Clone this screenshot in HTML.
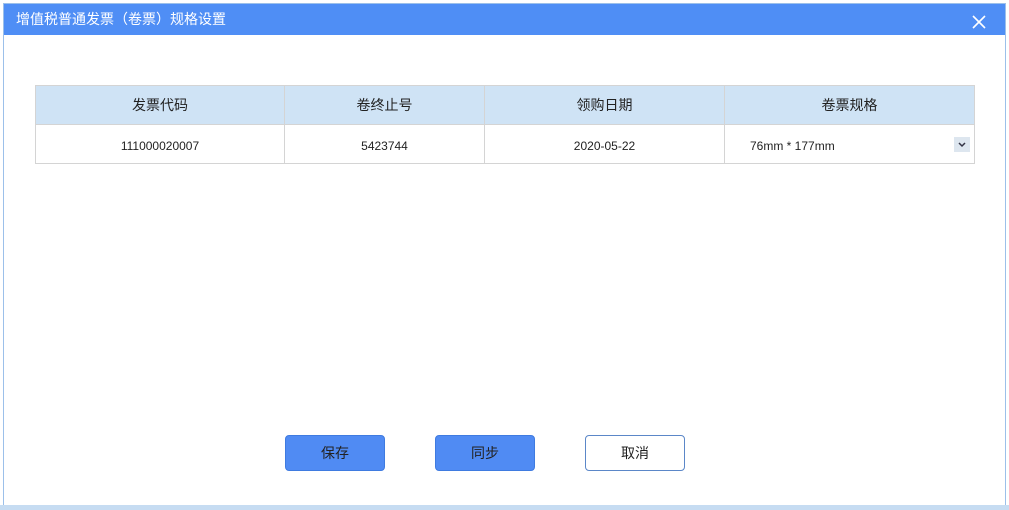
<!DOCTYPE html>
<html><head><meta charset="utf-8"><style>
body{margin:0;width:1009px;height:510px;background:#fff;position:relative;overflow:hidden;font-family:"Liberation Sans","Noto Sans CJK SC",sans-serif}
.win{position:absolute;left:3px;top:3px;width:1001px;height:501px;border:1px solid #9cc0ea;background:#fff}
.title{position:absolute;left:0;top:0;width:1001px;height:31px;background:#4f8ef5;color:#fff;font-size:14px;line-height:31px;padding-left:12px;box-sizing:border-box}
.x{position:absolute;right:18px;top:10px;width:16px;height:16px}
table{position:absolute;left:31px;top:81px;border-collapse:collapse;width:940px;font-size:12px;color:#222}
td,th{border:1px solid #d4d4d4;text-align:center;height:38px;padding:0}
td{padding-top:3px;height:35px}
th{background:#cfe3f5;font-weight:normal;font-size:14px}
.btn{position:absolute;top:431px;width:100px;height:36px;border-radius:4px;font-size:14px;line-height:35px;text-align:center;color:#222;box-sizing:border-box}
.bottom{position:absolute;left:0;top:505px;width:1009px;height:5px;background:#c6dcf2}
</style></head><body>
<div class="win">
<div class="title">增值税普通发票（卷票）规格设置<svg class="x" viewBox="0 0 16 16"><path d="M2 2L14 14M14 2L2 14" stroke="#fff" stroke-width="1.6"/></svg></div>
<table>
<tr><th style="width:248px">发票代码</th><th style="width:199px">卷终止号</th><th style="width:239px">领购日期</th><th>卷票规格</th></tr>
<tr><td>111000020007</td><td>5423744</td><td>2020-05-22</td><td style="text-align:left;padding-left:25px;position:relative">76mm * 177mm<span style="position:absolute;right:4px;top:12px;width:16px;height:15px;background:#dde6ef"><svg width="16" height="15" viewBox="0 0 16 15"><path d="M5 6L8 9L11 6" stroke="#334" stroke-width="1.5" fill="none"/></svg></span></td></tr>
</table>
<div class="btn" style="left:281px;background:#508bf3;border:1px solid #3f7be0">保存</div>
<div class="btn" style="left:431px;background:#508bf3;border:1px solid #3f7be0">同步</div>
<div class="btn" style="left:581px;background:#fff;border:1px solid #5b87c8">取消</div>
</div>
<div class="bottom"></div>
</body></html>
